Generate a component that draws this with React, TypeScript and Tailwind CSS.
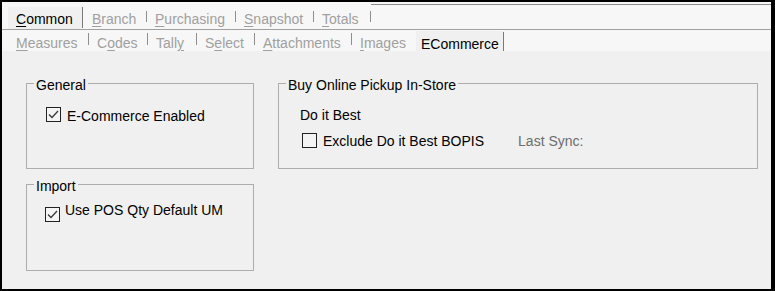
import type { ReactNode } from 'react'

type Tab = {
  pre?: string
  key: string
  post?: string
  width: string
  pad: string
}

const topTabs: Tab[] = [
  { key: 'B', post: 'ranch', width: 'w-[63px]', pad: 'pl-[9px]' },
  { key: 'P', post: 'urchasing', width: 'w-[88px]', pad: 'pl-[8px]' },
  { key: 'S', post: 'napshot', width: 'w-[77px]', pad: 'pl-[8px]' },
  { key: 'T', post: 'otals', width: 'w-[56px]', pad: 'pl-[8px]' },
]

const subTabs: Tab[] = [
  { key: 'M', post: 'easures', width: 'w-[81px]', pad: 'pl-[9px]' },
  { pre: 'C', key: 'o', post: 'des', width: 'w-[58px]', pad: 'pl-[8px]' },
  { pre: 'Tall', key: 'y', width: 'w-[48px]', pad: 'pl-[8px]' },
  { pre: 'S', key: 'e', post: 'lect', width: 'w-[57px]', pad: 'pl-[8px]' },
  { key: 'A', post: 'ttachments', width: 'w-[96px]', pad: 'pl-[8px]' },
]

const Label = ({ tab }: { tab: Tab }) => (
  <>
    {tab.pre}
    <span className="underline underline-offset-[2px]">{tab.key}</span>
    {tab.post}
  </>
)

const CheckBox = ({ checked, className }: { checked?: boolean; className?: string }) => (
  <span
    className={`flex h-[15px] w-[15px] shrink-0 items-center justify-center border border-[#222222] bg-[#f4f4f4] ${className ?? ''}`}
  >
    {checked && (
      <svg width="13" height="13" viewBox="0 0 13 13">
        <path d="M2 6.5 L5 9.5 L11 3" fill="none" stroke="#3a3a3a" strokeWidth="1.3" />
      </svg>
    )}
  </span>
)

const GroupBox = ({
  title,
  className,
  children,
}: {
  title: string
  className: string
  children: ReactNode
}) => (
  <fieldset className={`border border-[#adadad] ${className}`}>
    <legend className="ml-[7px] px-[2px] pt-[4px] leading-[16px]">{title}</legend>
    {children}
  </fieldset>
)

export default function App() {
  return (
    <div className="flex h-[291px] w-[775px] flex-col border-t-2 border-r-4 border-b-2 border-l-2 border-black bg-[#f0f0f0] font-[Liberation_Sans,Arial,sans-serif] text-[14px] leading-[16px] text-black">
      {/* first tab row */}
      <div className="flex h-[27px] items-start bg-[#f7f7f7] pl-[6px]">
        <div className="mt-[5px] h-[22px] w-[74px] bg-[#f0f0f0] pt-[4px] pl-[8px]">
          <span className="underline underline-offset-[2px]">C</span>ommon
        </div>
        <div className="mt-[5px] h-[21px] w-px bg-[#7a7a7a]" />
        {topTabs.map((tab) => (
          <div key={tab.key} className="flex items-start">
            <div className={`mt-[5px] h-[22px] pt-[4px] text-[#a0a0a0] ${tab.width} ${tab.pad}`}>
              <Label tab={tab} />
            </div>
            <div className="mt-[9px] h-[11px] w-px bg-[#8f8f8f]" />
          </div>
        ))}
        <div className="mt-[2px] flex-1 border-t border-[#8c8c8c]" />
      </div>
      <div className="h-px bg-[#a0a0a0]" />

      {/* second tab row */}
      <div className="flex h-[21px] items-start bg-[#f7f7f7] pl-[5px]">
        {subTabs.map((tab) => (
          <div key={tab.post ?? tab.pre} className="flex items-start">
            <div className={`mt-[1px] h-[20px] pt-[4px] text-[#a0a0a0] ${tab.width} ${tab.pad}`}>
              <Label tab={tab} />
            </div>
            <div className="mt-[3px] h-[12px] w-px bg-[#8f8f8f]" />
          </div>
        ))}
        <div className="mt-[1px] h-[20px] w-[64px] pt-[4px] pl-[8px] text-[#a0a0a0]">
          <span className="underline underline-offset-[2px]">I</span>mages
        </div>
        <div className="mt-[1px] h-[20px] w-[87px] bg-[#f0f0f0] pt-[5px] pl-[5px]">ECommerce</div>
        <div className="mt-[2px] h-[19px] w-px bg-[#7a7a7a]" />
      </div>

      {/* page body */}
      <div className="flex flex-1 items-start gap-[24px] pt-[22px] pl-[24px]">
        <div className="flex w-[228px] flex-col gap-[5px]">
          <GroupBox title="General" className="h-[96px] w-[228px]">
            <div className="flex items-start gap-[6px] pt-[14px] pl-[19px]">
              <CheckBox checked />
              <span className="mt-[1px]">E-Commerce Enabled</span>
            </div>
          </GroupBox>
          <GroupBox title="Import" className="h-[97px] w-[228px]">
            <div className="flex items-start gap-[5px] pt-[8px] pl-[18px]">
              <CheckBox checked className="mt-[5px]" />
              <span>Use POS Qty Default UM</span>
            </div>
          </GroupBox>
        </div>

        <GroupBox title="Buy Online Pickup In-Store" className="h-[96px] w-[480px]">
          <div className="pt-[14px] pl-[21px]">Do it Best</div>
          <div className="mt-[10px] flex items-start pl-[23px]">
            <CheckBox />
            <span className="ml-[6px]">Exclude Do it Best BOPIS</span>
            <span className="ml-[34px] text-[#6d6d6d]">Last Sync:</span>
          </div>
        </GroupBox>
      </div>
    </div>
  )
}
